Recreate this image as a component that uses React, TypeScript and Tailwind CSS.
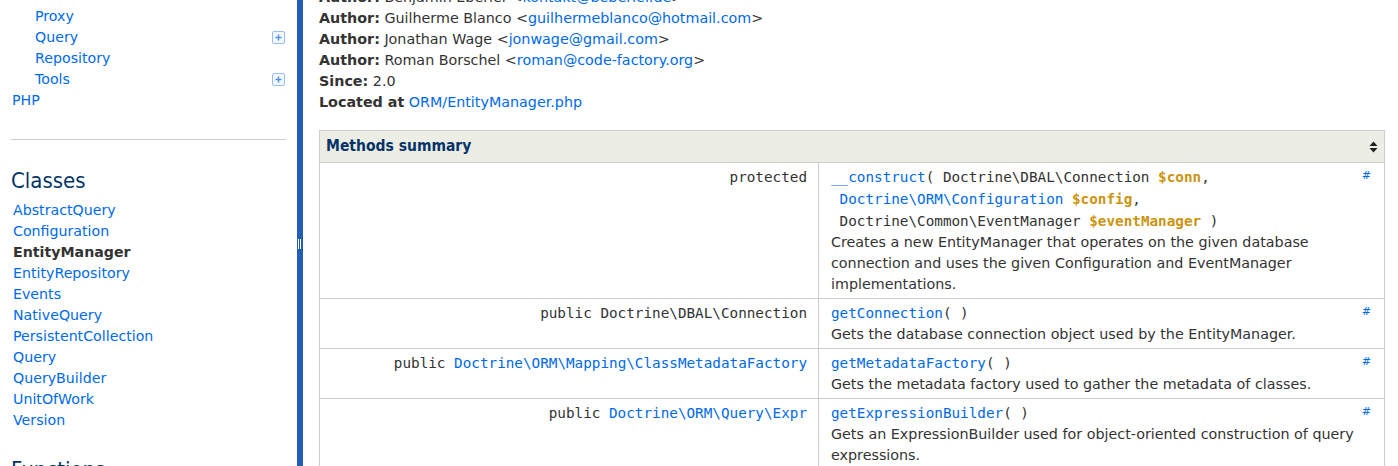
import React from "react";

const SANS = "font-['DejaVu_Sans',sans-serif]";
const MONO = "font-['DejaVu_Sans_Mono',monospace]";
const COND = "font-['DejaVu_Sans_Condensed','DejaVu_Sans',sans-serif]";
const LINK = "text-[#006aeb]";
const VAR = "font-bold text-[#cc9410]";

function PlusIcon() {
  return (
    <span className="inline-flex w-[13px] h-[13px] items-center justify-center rounded-[2px] border border-[#99bff0] bg-[#f3f8ff]">
      <svg width="7" height="7" viewBox="0 0 7 7">
        <rect x="2.8" y="0.5" width="1.4" height="6" fill="#4d8fe6" />
        <rect x="0.5" y="2.8" width="6" height="1.4" fill="#4d8fe6" />
      </svg>
    </span>
  );
}

function SortIcon() {
  return (
    <svg width="9" height="12" viewBox="0 0 9 12">
      <path d="M4.5 0.5 L8.5 5 L0.5 5 Z" fill="#222" />
      <path d="M4.5 11.5 L8.5 7 L0.5 7 Z" fill="#222" />
    </svg>
  );
}

const packages: { name: string; sub: boolean; plus?: boolean }[] = [
  { name: "Proxy", sub: true },
  { name: "Query", sub: true, plus: true },
  { name: "Repository", sub: true },
  { name: "Tools", sub: true, plus: true },
  { name: "PHP", sub: false },
];

const classes = [
  "AbstractQuery",
  "Configuration",
  "EntityManager",
  "EntityRepository",
  "Events",
  "NativeQuery",
  "PersistentCollection",
  "Query",
  "QueryBuilder",
  "UnitOfWork",
  "Version",
];

function Sidebar() {
  return (
    <aside className={`w-[297px] shrink-0 pt-[5.5px] ${SANS} text-[14.2px] leading-[21px] text-[#333]`}>
      <ul className="pl-[12px] pr-[12px]">
        {packages.map((p) => (
          <li key={p.name} className={`flex h-[21px] items-center justify-between ${p.sub ? "pl-[23px]" : ""}`}>
            <span className={LINK}>{p.name}</span>
            {p.plus && <PlusIcon />}
          </li>
        ))}
      </ul>
      <div className="mx-[11px] mt-[28px] border-t border-[#cccccc]" />
      <h3 className={`${COND} mt-[28px] mb-[6px] pl-[11px] text-[22px] leading-[26px] text-[#053368]`}>Classes</h3>
      <ul className="pl-[13px]">
        {classes.map((c) => (
          <li key={c} className="h-[21px]">
            {c === "EntityManager" ? (
              <span className="font-bold text-[#333]">{c}</span>
            ) : (
              <span className={LINK}>{c}</span>
            )}
          </li>
        ))}
      </ul>
      <h3 className={`${COND} mt-[26px] pl-[11px] text-[22px] leading-[26px] text-[#053368]`}>Functions</h3>
    </aside>
  );
}

function Splitter() {
  return (
    <div className="relative w-[6px] shrink-0 bg-[#1e5eb6]">
      <div className="absolute left-[1px] top-[239px] flex gap-[1px]">
        <div className="h-[10px] w-[1px] bg-white" />
        <div className="h-[10px] w-[1px] bg-white" />
      </div>
    </div>
  );
}

function Row({
  left,
  code,
  desc,
}: {
  left: React.ReactNode;
  code: React.ReactNode[];
  desc: string[];
}) {
  return (
    <div className="flex border-b border-[#cccccc]">
      <div className={`w-[499px] shrink-0 border-r border-[#cccccc] pr-[11px] pt-[3px] text-right ${MONO} text-[14.3px] leading-[22px] whitespace-pre text-[#333]`}>
        {left}
      </div>
      <div className="flex flex-1 pl-[12px] pr-[13px] pt-[3px] pb-[3px]">
        <div className="flex-1">
          {code.map((c, i) => (
            <div key={i} className={`${MONO} text-[14.3px] leading-[22px] whitespace-pre text-[#333]`}>
              {c}
            </div>
          ))}
          {desc.map((d, i) => (
            <div key={i} className="whitespace-nowrap">
              {d}
            </div>
          ))}
        </div>
        <span className={`${LINK} text-[11px] leading-[18px] mt-[1px]`}>#</span>
      </div>
    </div>
  );
}

function Main() {
  const authors: [string, string][] = [
    ["Benjamin Eberlei", "kontakt@beberlei.de"],
    ["Guilherme Blanco", "guilhermeblanco@hotmail.com"],
    ["Jonathan Wage", "jonwage@gmail.com"],
    ["Roman Borschel", "roman@code-factory.org"],
  ];
  return (
    <main className={`flex-1 min-w-0 pl-[16px] pr-[13px] ${SANS} text-[14.3px] leading-[21px] text-[#333]`}>
      <div className="-mt-[13.5px]">
        {authors.map(([n, e]) => (
          <div key={n}>
            <b>Author:</b> {n} &lt;<span className={LINK}>{e}</span>&gt;
          </div>
        ))}
        <div>
          <b>Since:</b> 2.0
        </div>
        <div>
          <b>Located at</b> <span className={LINK}>ORM/EntityManager.php</span>
        </div>
      </div>
      <div className="mt-[17.5px] border border-[#cccccc] border-b-0">
        <div className="flex h-[32px] items-center justify-between border-b border-[#cccccc] bg-[#ecede5] pl-[6px] pr-[6px]">
          <span className={`${COND} text-[15.5px] font-bold text-[#053368]`}>Methods summary</span>
          <SortIcon />
        </div>
        <Row
          left="protected"
          code={[
            <>
              <span className={LINK}>__construct</span>( Doctrine\DBAL\Connection <span className={VAR}>$conn</span>,
            </>,
            <>
              {" "}
              <span className={LINK}>Doctrine\ORM\Configuration</span> <span className={VAR}>$config</span>,
            </>,
            <>
              {" "}Doctrine\Common\EventManager <span className={VAR}>$eventManager</span> )
            </>,
          ]}
          desc={[
            "Creates a new EntityManager that operates on the given database",
            "connection and uses the given Configuration and EventManager",
            "implementations.",
          ]}
        />
        <Row
          left={"public Doctrine\\DBAL\\Connection"}
          code={[
            <>
              <span className={LINK}>getConnection</span>( )
            </>,
          ]}
          desc={["Gets the database connection object used by the EntityManager."]}
        />
        <Row
          left={
            <>
              public <span className={LINK}>Doctrine\ORM\Mapping\ClassMetadataFactory</span>
            </>
          }
          code={[
            <>
              <span className={LINK}>getMetadataFactory</span>( )
            </>,
          ]}
          desc={["Gets the metadata factory used to gather the metadata of classes."]}
        />
        <Row
          left={
            <>
              public <span className={LINK}>Doctrine\ORM\Query\Expr</span>
            </>
          }
          code={[
            <>
              <span className={LINK}>getExpressionBuilder</span>( )
            </>,
          ]}
          desc={[
            "Gets an ExpressionBuilder used for object-oriented construction of query",
            "expressions.",
          ]}
        />
      </div>
    </main>
  );
}

export default function App() {
  return (
    <div className="flex h-[466px] w-[1398px] overflow-hidden bg-white">
      <Sidebar />
      <Splitter />
      <Main />
    </div>
  );
}
